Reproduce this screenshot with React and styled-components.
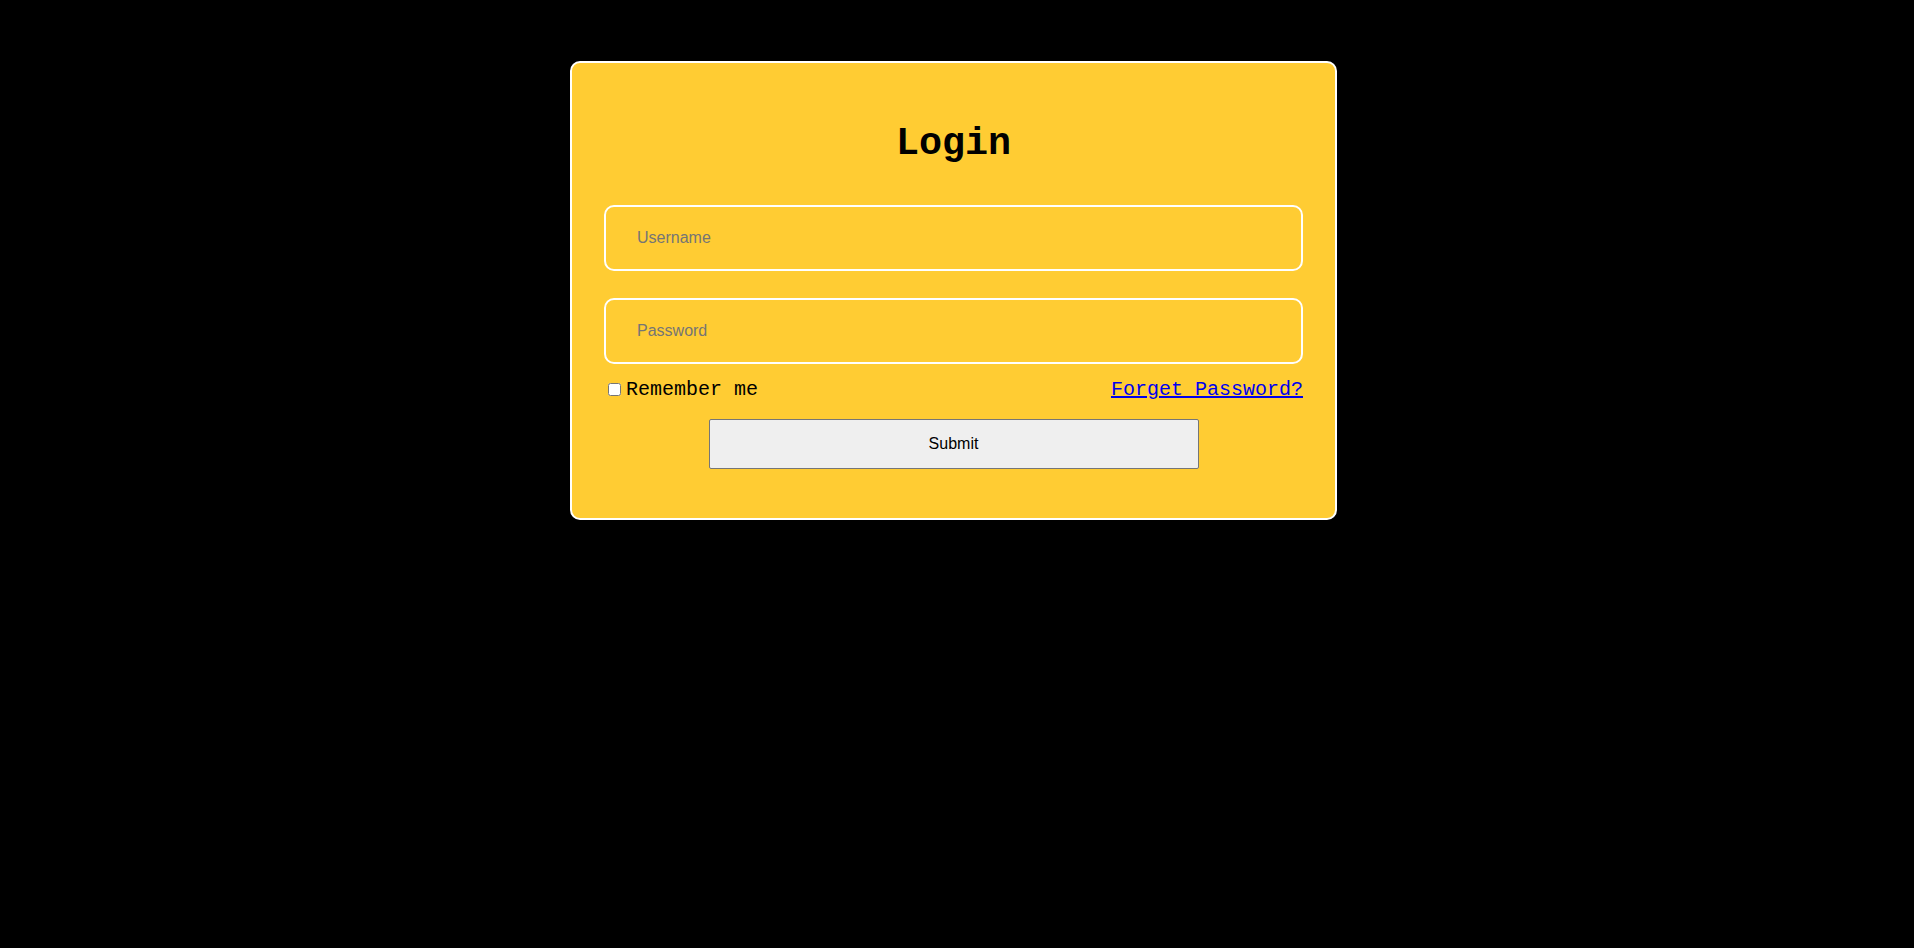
import React from "react";
import styled, { createGlobalStyle } from "styled-components";

const GlobalStyle = createGlobalStyle`
  html, body {
    margin: 0;
    background: #000;
  }
  body {
    font-family: "Liberation Mono", "Courier New", monospace;
  }
`;

const Page = styled.div`
  display: flex;
  justify-content: center;
  padding: 61px 7px 0 0;
  min-height: 100vh;
  box-sizing: border-box;
  background: #000;
`;

const Card = styled.form`
  width: 767px;
  height: 459px;
  box-sizing: border-box;
  background: #ffcc33;
  border: 2px solid #fff;
  border-radius: 10px;
  padding: 59px 32px 0;
  display: flex;
  flex-direction: column;
`;

const Title = styled.h1`
  margin: 0 0 39px;
  text-align: center;
  font-family: "Liberation Mono", "Courier New", monospace;
  font-size: 38.4px;
  line-height: 44px;
  font-weight: bold;
  color: #000;
`;

const Field = styled.input`
  height: 66px;
  box-sizing: border-box;
  width: 100%;
  background: transparent;
  border: 2px solid #fff;
  border-radius: 10px;
  padding: 0 31px;
  margin-bottom: ${p => p.$last ? "14px" : "27px"};
  font-family: "Liberation Sans", Arial, sans-serif;
  font-size: 16px;
  color: #000;
  outline: none;
  &::placeholder {
    color: #757575;
  }
`;

const Row = styled.div`
  display: flex;
  justify-content: space-between;
  align-items: center;
  height: 23px;
  margin-bottom: 18px;
`;

const Remember = styled.label`
  display: flex;
  align-items: center;
  font-family: "Liberation Mono", "Courier New", monospace;
  font-size: 20px;
  color: #000;
`;

const Check = styled.input`
  width: 13px;
  height: 13px;
  margin: 0 5px 0 4px;
`;

const Forget = styled.a`
  font-family: "Liberation Mono", "Courier New", monospace;
  font-size: 20px;
  color: #0000ee;
  text-decoration: underline;
`;

const Submit = styled.button`
  align-self: center;
  width: 490px;
  height: 50px;
  background: #efefef;
  border: 1px solid #767676;
  border-radius: 2px;
  font-family: "Liberation Sans", Arial, sans-serif;
  font-size: 16px;
  color: #000;
`;

export default function App() {
  return (
    <Page>
      <GlobalStyle />
      <Card onSubmit={e => e.preventDefault()}>
        <Title>Login</Title>
        <Field type="text" placeholder="Username" />
        <Field type="password" placeholder="Password" $last />
        <Row>
          <Remember>
            <Check type="checkbox" />
            Remember me
          </Remember>
          <Forget href="#">Forget Password?</Forget>
        </Row>
        <Submit type="submit">Submit</Submit>
      </Card>
    </Page>
  );
}
